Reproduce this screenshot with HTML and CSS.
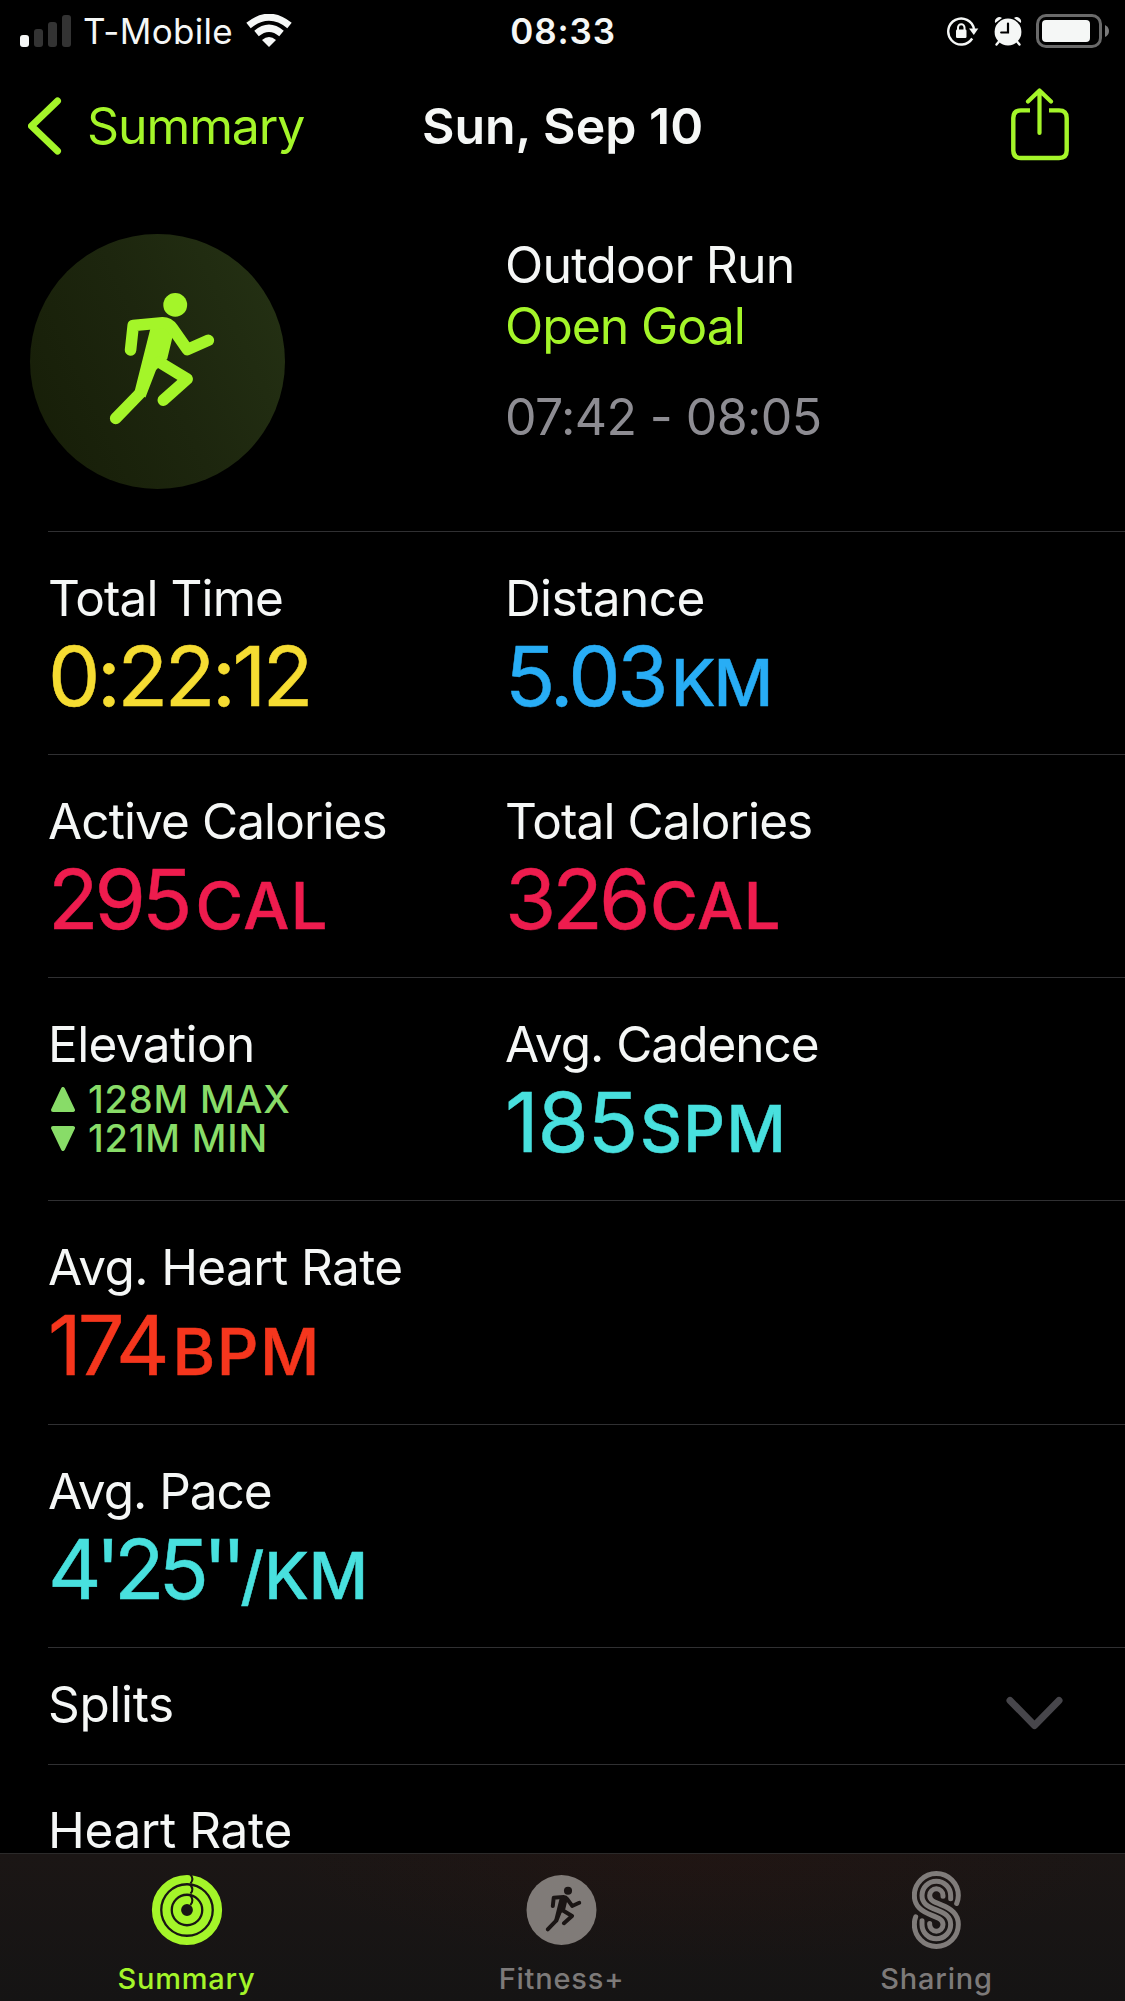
FILE: index.html
```html
<!doctype html>
<html lang="en">
    <head>
        <meta charset="UTF-8" />
        <meta name="viewport" content="width=device-width, initial-scale=1.0" />
        <title>Outdoor Run</title>
        <link rel="stylesheet" href="styles.css">
    </head>
    <body>
        <!-- shared shapes -->
        <svg class="defs" width="0" height="0">
            <symbol id="runner" viewBox="268 216 320 402">
                <circle cx="468" cy="255" r="36" fill="currentColor" />
                <path d="M395 318 L430 309 L465 330 L444 418 L410 452 L378 535 L345 517 Z" fill="currentColor" />
                <path d="M333 391 L341 317 L430 309 Q448 309 460 326 L505 390 L568 362 M361 523 L288 598 M420 428 L504 479 L432 543" fill="none" stroke="currentColor" stroke-width="35" stroke-linecap="round" stroke-linejoin="round" />
            </symbol>
        </svg>

        <header class="status-bar">
            <div class="status-left">
                <svg class="signal" width="51" height="32" viewBox="0 0 51 32">
                    <rect x="0" y="20" width="9" height="12" rx="3" fill="#f5f7f6" />
                    <rect x="14" y="14" width="9" height="18" rx="3" fill="#333" />
                    <rect x="28" y="7" width="9" height="25" rx="3" fill="#333" />
                    <rect x="42" y="0" width="9" height="32" rx="3" fill="#333" />
                </svg>
                <span class="carrier">T-Mobile</span>
                <svg class="wifi" width="46" height="34" viewBox="0 0 46 34">
                    <path d="M23 33 L16 26 Q23 20 30 26 Z" fill="#f5f7f6" />
                    <path d="M10.5 19.5 Q23 9 35.5 19.5" fill="none" stroke="#f5f7f6" stroke-width="7" />
                    <path d="M2.5 11.5 Q23 -5 43.5 11.5" fill="none" stroke="#f5f7f6" stroke-width="7" />
                </svg>
            </div>
            <span class="clock">08:33</span>
            <div class="status-right">
                <svg width="32" height="30" viewBox="0 0 32 30">
                    <path d="M25.2 22.5 A13 13 0 1 1 27 13" fill="none" stroke="#f5f7f6" stroke-width="2.4" />
                    <path d="M22 12.5 H31.3 L26.8 19 Z" fill="#f5f7f6" />
                    <rect x="9" y="13.5" width="10.5" height="8.5" rx="1.2" fill="#f5f7f6" />
                    <path d="M11 14 V11.5 A3.2 3.2 0 0 1 17.5 11.5 V14" fill="none" stroke="#f5f7f6" stroke-width="2" />
                </svg>
                <svg class="alarm" width="28" height="30" viewBox="0 0 28 30">
                    <circle cx="14" cy="16" r="13.4" fill="#f5f7f6" />
                    <path d="M1.2 7 A4.4 4.4 0 0 1 8 2 Z M26.8 7 A4.4 4.4 0 0 0 20 2 Z" fill="#f5f7f6" />
                    <path d="M5 25.5 L2.5 28.5 M23 25.5 L25.5 28.5" stroke="#f5f7f6" stroke-width="2.4" stroke-linecap="round" />
                    <path d="M14 7.5 V16.5 H7.2" fill="none" stroke="#000" stroke-width="2.2" stroke-linecap="round" />
                </svg>
                <svg class="battery" width="74" height="34" viewBox="0 0 74 34">
                    <rect x="1.5" y="1.5" width="63" height="31" rx="8.5" fill="none" stroke="#6a6a6a" stroke-width="3" />
                    <rect x="6" y="6" width="48" height="22" rx="4" fill="#f5f7f6" />
                    <path d="M69 11 Q73 13 73 17 Q73 21 69 23 Z" fill="#7a7a7a" />
                </svg>
            </div>
        </header>

        <nav class="nav-bar">
            <a class="back">
                <svg width="34" height="58" viewBox="0 0 34 58">
                    <path d="M29.5 4 L3.5 29 L29.5 54" fill="none" stroke="#a4f529" stroke-width="7" stroke-linecap="round" stroke-linejoin="round" />
                </svg>
                <span class="back-label">Summary</span>
            </a>
            <h1 class="nav-title">Sun, Sep 10</h1>
            <svg class="share" width="58" height="73" viewBox="0 0 58 73">
                <path d="M19 22.4 H10 Q2.3 22.4 2.3 30 V62.5 Q2.3 70 10 70 H48 Q55.7 70 55.7 62.5 V30 Q55.7 22.4 48 22.4 H38" fill="none" stroke="#a4f529" stroke-width="4.4" />
                <path d="M28.5 45 V3 M17 13.5 L28.5 2.5 L40 13.5" fill="none" stroke="#a4f529" stroke-width="4.2" stroke-linecap="round" stroke-linejoin="round" />
            </svg>
        </nav>

        <main class="workout">
            <section class="hero">
                <div class="badge">
                    <svg width="106" height="133"><use href="#runner" /></svg>
                </div>
                <div class="hero-text">
                    <p class="activity">Outdoor Run</p>
                    <p class="goal">Open Goal</p>
                    <p class="period">07:42 - 08:05</p>
                </div>
            </section>

            <section class="row">
                <div class="metric">
                    <h2 class="label">Total Time</h2>
                    <p class="value time">0:22:12</p>
                </div>
                <div class="metric">
                    <h2 class="label loose">Distance</h2>
                    <p class="value distance">5.03<span class="unit">KM</span></p>
                </div>
            </section>

            <section class="row">
                <div class="metric">
                    <h2 class="label">Active Calories</h2>
                    <p class="value calories">295<span class="unit">CAL</span></p>
                </div>
                <div class="metric">
                    <h2 class="label">Total Calories</h2>
                    <p class="value calories total">326<span class="unit">CAL</span></p>
                </div>
            </section>

            <section class="row">
                <div class="metric">
                    <h2 class="label loose">Elevation</h2>
                    <ul class="elevation">
                        <li>
                            <svg width="24" height="25" viewBox="0 0 24 25"><path d="M12 2 L22 23 H2 Z" /></svg>
                            <span>128M MAX</span>
                        </li>
                        <li>
                            <svg width="24" height="25" viewBox="0 0 24 25"><path d="M12 23 L22 2 H2 Z" /></svg>
                            <span>121M MIN</span>
                        </li>
                    </ul>
                </div>
                <div class="metric">
                    <h2 class="label tight">Avg. Cadence</h2>
                    <p class="value cadence">185<span class="unit">SPM</span></p>
                </div>
            </section>

            <section class="row">
                <div class="metric">
                    <h2 class="label loose">Avg. Heart Rate</h2>
                    <p class="value heart">174<span class="unit">BPM</span></p>
                </div>
            </section>

            <section class="row">
                <div class="metric">
                    <h2 class="label tight">Avg. Pace</h2>
                    <p class="value pace">4'25''<span class="unit">/KM</span></p>
                </div>
            </section>

            <section class="row splits">
                <h2 class="label looser">Splits</h2>
                <svg class="chevron" width="58" height="34" viewBox="0 0 58 34">
                    <path d="M4 4.5 L28.5 29.5 L53 4.5" fill="none" stroke="#47464b" stroke-width="7" stroke-linecap="round" stroke-linejoin="round" />
                </svg>
            </section>

            <section class="row heart-rate">
                <h2 class="label looser">Heart Rate</h2>
            </section>
        </main>

        <footer class="tab-bar">
            <a class="tab active">
                <svg width="78" height="78" viewBox="-39 -39 78 78">
                    <g fill="none" stroke="#a4f529" stroke-width="8.2">
                        <circle r="31" />
                        <circle r="20.5" />
                        <circle r="10" />
                    </g>
                    <path d="M3 -36 Q7.5 -31 3.5 -26.5 M3 -25.5 Q7.5 -20.5 3.5 -16.5 M3 -15 Q7.5 -10 3.5 -5" fill="none" stroke="#1a1513" stroke-width="2" />
                </svg>
                <span>Summary</span>
            </a>
            <a class="tab">
                <svg width="78" height="78" viewBox="0 0 78 78">
                    <circle cx="38.5" cy="39" r="35" fill="#807b78" />
                    <use href="#runner" class="mini-runner" x="22.5" y="15" width="36" height="46" />
                </svg>
                <span>Fitness+</span>
            </a>
            <a class="tab">
                <svg width="49" height="78" viewBox="186 94 147 233">
                    <g fill="none" stroke="#807c7a" stroke-width="15" stroke-linecap="round">
                        <path d="M320 191 Q325 180 325 167 A66 66 0 0 0 193 167 C193 199 214 214 244 226 C268 235 279 240 279 254 A20 20 0 0 1 239 254 V251" />
                        <path d="M302 177 V167 A43 43 0 0 0 216 167 C216 190 232 200 259 210 C286 220 302 231 302 254 A43 43 0 0 1 216 254 V243" />
                        <path d="M279 169 V167 A20 20 0 0 0 239 167 C239 181 250 186 274 195 C304 207 325 222 325 254 A66 66 0 0 1 193 254 Q193 241 197 231" />
                    </g>
                </svg>
                <span>Sharing</span>
            </a>
        </footer>
    </body>
</html>
```
FILE: styles.css
```css
* {
    box-sizing: border-box;
}

body {
    display: flex;
    flex-direction: column;
    height: 2001px;
    margin: 0;
    overflow: hidden;
    background: #000;
    color: #f5f7f6;
    font-family: Inter, 'Liberation Sans', sans-serif;
}

h1,
h2,
p,
ul {
    margin: 0;
    padding: 0;
    font-weight: 400;
    white-space: nowrap;
}

svg {
    display: block;
    flex: none;
}

.defs {
    position: absolute;
}

/* status bar */
.status-bar {
    display: grid;
    grid-template-columns: 1fr auto 1fr;
    align-items: center;
    height: 62px;
    padding: 0 15px 0 20px;
    font-size: 35px;
    line-height: 62px;
}

.status-left,
.status-right {
    display: flex;
    align-items: center;
}

.status-right {
    justify-content: flex-end;
}

.carrier {
    margin: 0 13px 0 12px;
    letter-spacing: 0.3px;
}

.clock {
    margin-right: 4px;
    font-weight: 600;
    letter-spacing: 0.9px;
}

.alarm {
    margin: 0 14px 0 15px;
}

/* navigation */
.nav-bar {
    display: grid;
    grid-template-columns: 1fr auto 1fr;
    align-items: center;
    height: 128px;
    padding: 0 28px;
    font-size: 50px;
}

.back {
    display: flex;
    align-items: center;
    gap: 25px;
    color: #a4f529;
    letter-spacing: -1.1px;
}

.nav-title {
    font-size: 50px;
    font-weight: 600;
}

.share {
    justify-self: end;
    margin: 0 28px 4px 0;
}

/* workout */
.workout {
    flex: 1;
    min-height: 0;
    overflow: hidden;
}

.hero {
    display: flex;
    height: 341px;
    padding: 44px 0 0 30px;
}

.badge {
    display: flex;
    align-items: center;
    justify-content: center;
    width: 255px;
    height: 255px;
    margin-right: 220px;
    padding: 0 0 6px 9px;
    border-radius: 50%;
    background: linear-gradient(65deg, #161d07, #1d260e 50%, #253214);
    color: #a4f529;
}

.hero-text {
    padding-top: 1px;
    font-size: 50px;
    line-height: 61px;
    letter-spacing: -0.8px;
}

.goal {
    color: #a4f529;
    letter-spacing: -1.1px;
}

.period {
    margin-top: 30px;
    color: #8d8c92;
    letter-spacing: -0.6px;
}

.row {
    display: flex;
    height: 223.15px;
    margin-left: 48px;
    padding-top: 36px;
    border-top: 1px solid #303032;
}

.metric {
    width: 457px;
}

.label {
    font-size: 49.5px;
    line-height: 60px;
    letter-spacing: -0.9px;
}

.label.tight {
    letter-spacing: -1px;
}

.label.loose {
    letter-spacing: -0.6px;
}

.label.looser {
    letter-spacing: -0.35px;
}

.value {
    margin-top: 3px;
    font-size: 83px;
    line-height: 90px;
    letter-spacing: -4px;
    -webkit-text-stroke: 0.5px currentColor;
}

.unit {
    margin-left: 7px;
    font-size: 65px;
    font-weight: 500;
    line-height: 1;
    letter-spacing: 1.5px;
}

.value.time {
    color: #f5dc32;
    letter-spacing: -3.4px;
}

.value.distance {
    color: #28adf5;
    letter-spacing: -3.4px;
}

.distance .unit {
    margin-left: 6px;
    letter-spacing: -2px;
}

.calories {
    color: #ee1c4e;
}

.total .unit {
    margin-left: 4px;
    letter-spacing: 0.5px;
}

.cadence,
.pace {
    color: #48e0de;
}

.value.cadence {
    letter-spacing: -1.2px;
}

.cadence .unit {
    margin-left: 3px;
    letter-spacing: 1.4px;
}

.value.pace {
    letter-spacing: -6.2px;
}

.pace .unit {
    margin-left: 0;
    letter-spacing: 0;
}

.heart {
    color: #f5361d;
}

.elevation {
    margin-top: 6px;
    color: #88dc68;
    font-size: 38px;
    font-weight: 500;
    line-height: 39px;
    letter-spacing: 0.8px;
    list-style: none;
}

.elevation li {
    display: flex;
    align-items: center;
    gap: 13px;
    padding-left: 3px;
}

.elevation path {
    fill: #88dc68;
    stroke: #88dc68;
    stroke-width: 4;
    stroke-linejoin: round;
}

.splits {
    justify-content: space-between;
    height: 117.2px;
    padding: 26px 61px 0 0;
}

.heart-rate {
    padding-top: 35px;
}

.chevron {
    margin-top: 22px;
}

/* tab bar */
.tab-bar {
    display: flex;
    height: 148px;
    border-top: 1px solid #2b2a2a;
    background:
        radial-gradient(ellipse 420px 110px at 700px 0, rgba(45, 20, 15, 0.3), transparent),
        linear-gradient(#1b1615, #151414);
}

.tab {
    display: flex;
    flex-direction: column;
    align-items: center;
    width: 375px;
    padding: 17px 2px 0 0;
    color: #7d7a79;
    font-size: 29px;
    font-weight: 500;
    line-height: 36px;
    letter-spacing: 0.8px;
}

.tab span {
    margin-top: 12px;
}

.tab.active {
    color: #a4f529;
}

.mini-runner {
    color: #1a1514;
}
```
